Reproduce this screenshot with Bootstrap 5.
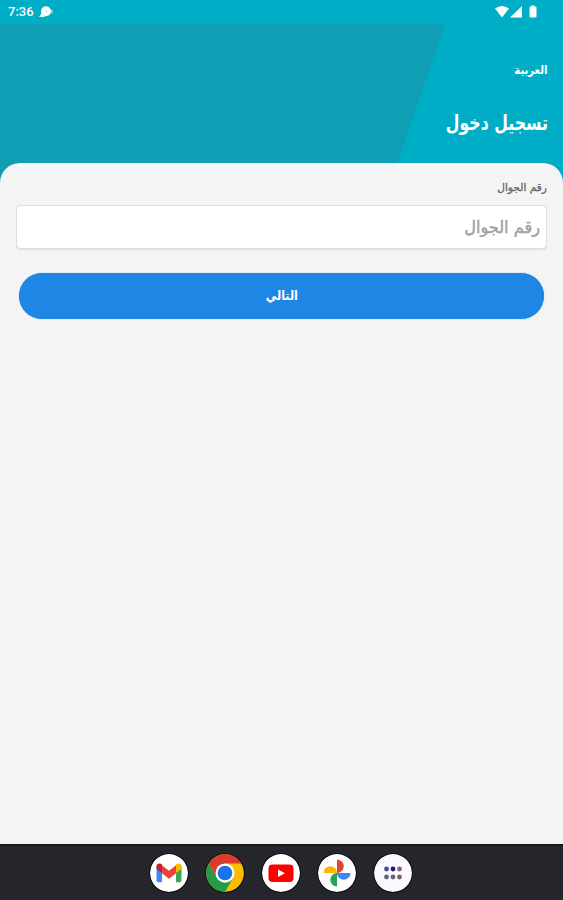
<!DOCTYPE html>
<html lang="ar" dir="rtl">
<head>
<meta charset="utf-8">
<meta name="viewport" content="width=device-width, initial-scale=1">
<title>تسجيل دخول</title>
<link href="https://cdn.jsdelivr.net/npm/bootstrap@5.3.0/dist/css/bootstrap.min.css" rel="stylesheet">
<style>
  body { font-family: "DejaVu Sans", sans-serif; background: #f4f4f4; overflow: hidden; }
  .hero { height: 184px; background: #00adc6; }
  .hero-band { height: 184px; background: #0f9fb4; clip-path: polygon(0 24px, 445px 24px, 390px 184px, 0 184px); }
  .status { height: 24px; padding: 0 26px 0 8px; color: #fff; font: 500 13px/24px Roboto, sans-serif; }
  .topbar { height: 92px; padding: 0 15px; }
  .hero-layout { display: grid; }
  .hero-layout > * { grid-area: 1 / 1; min-width: 0; }
  .lang { font-size: 12px; line-height: 16px; margin-top: 38px; transform: scaleX(.84); transform-origin: right; }
  .back { margin-top: 35px; }
  .title { font-size: 21px; line-height: 28px; padding: 0; margin: -7px 15px 0; transform: scaleX(.75); transform-origin: right; }
  .sheet { background: #f4f4f4; border-radius: 20px 20px 0 0; margin-top: -21px; padding: 16px 16px 0; }
  .phone-label { font-size: 11px; line-height: 18px; color: #666; -webkit-text-stroke: .3px #666; transform: scaleX(.965); transform-origin: right; }
  .phone.form-control { height: 44px; margin-top: 8px; border: 1px solid #dedede; border-radius: 4px; padding: 0 6px; font-size: 17px; box-shadow: 0 1px 1px #e3e3e3; }
  .phone::placeholder { color: #a2a2a2; -webkit-text-stroke: .5px #a2a2a2; transform: scaleX(.95); transform-origin: right; opacity: 1; }
  .next.btn { height: 46px; margin: 24px 3px 0; background: #1e87e5; color: #fff; font-size: 13px; padding: 0; box-shadow: 0 0 1px #1e87e5; }
  .next span { display: inline-block; transform: scaleX(.86); }
  .dock { height: 56px; background: #25262b; border-top: 2px solid #17181b; gap: 18px; padding-right: 1px; }
  .app-icon { width: 38px; height: 38px; border-radius: 50%; box-shadow: 0 0 0 1px #111216; }
</style>
<script src="https://cdn.jsdelivr.net/npm/bootstrap@5.3.0/dist/js/bootstrap.bundle.min.js"></script>
</head>
<body class="vh-100 d-flex flex-column">
<header class="hero hero-layout flex-shrink-0">
  <div class="hero-band"></div>
  <div>
    <div class="status d-flex align-items-center justify-content-between" dir="ltr">
      <div class="d-flex align-items-center gap-1"><span>7:36</span>
        <svg width="16" height="12" viewBox="0 0 16 12"><circle cx="8" cy="5.300" r="5" fill="#fff"/><path d="M4 7 1 11h6z" fill="#fff"/><path d="M8 3v3h2" fill="none" stroke="#b5e2e9"/><path d="M14 3.500v4" stroke="#8fd8e3" stroke-width="1.500"/></svg>
      </div>
      <svg width="42" height="14" viewBox="0 0 42 14" fill="#fff"><path d="M0 3.600Q7 -1.800 14 3.600L7 12.500z"/><path d="M27 1v11.500H15z"/><path d="M35.500 1.500h1V.5h3v1h1q1 0 1 1v9q0 1-1 1h-5q-1 0-1-1v-9q0-1 1-1z"/></svg>
    </div>
    <div class="topbar d-flex justify-content-between align-items-start">
      <a class="lang text-white fw-bold text-decoration-none" href="#">العربية</a>
      <a class="back d-flex" href="#" aria-label="رجوع"><svg width="14" height="14" viewBox="0 0 14 14" fill="none" stroke="#fff" stroke-width="1.900"><path d="M14 7H1.800M7 1.500 1.500 7 7 12.500"/></svg></a>
    </div>
    <h1 class="title text-white fw-bold">تسجيل دخول</h1>
  </div>
</header>
<main class="sheet position-relative flex-grow-1">
  <form class="d-flex flex-column">
    <label class="phone-label" for="phone">رقم الجوال</label>
    <input id="phone" class="phone form-control" type="text" placeholder="رقم الجوال">
    <button class="next btn rounded-pill fw-bold" type="button"><span>التالي</span></button>
  </form>
</main>
<footer class="dock d-flex justify-content-center align-items-center flex-shrink-0" dir="ltr">
  <svg class="app-icon" viewBox="0 0 38 38"><circle cx="19" cy="19" r="19" fill="#fff"/><path d="M6.500 12v14.500q0 1.800 1.800 1.800H12V16z" fill="#4285f4"/><path d="M31.500 12v14.500q0 1.800-1.800 1.800H26V16z" fill="#34a853"/><path d="M11 10.500 19 16.700l8-6.200V18.500l-8 6.200L11 18.500z" fill="#ea4335"/><path d="M6.500 12.500c0-3 3-3.800 5.500-2V19l-5.500-4.300z" fill="#c5221f"/><path d="M31.500 12.500c0-3-3-3.800-5.500-2V19l5.500-4.300z" fill="#fbbc04"/></svg>
  <svg class="app-icon" viewBox="0 0 38 38"><circle cx="19" cy="19" r="19" fill="#fbbc05"/><path d="M2.500 9.500A19 19 0 0 1 35.500 9.500H19L11 24z" fill="#dc3a2c"/><path d="M2.500 9.500 10.800 23.700A9.500 9.500 0 0 0 27.200 23.700L19 38A19 19 0 0 1 2.500 9.500" fill="#249b47"/><circle cx="19" cy="19" r="9.500" fill="#fff"/><circle cx="19" cy="19" r="7.300" fill="#1a73e8"/></svg>
  <svg class="app-icon" viewBox="0 0 38 38"><circle cx="19" cy="19" r="19" fill="#fff"/><rect x="6.500" y="10.500" width="25" height="17.500" rx="4" fill="#f00"/><path d="m16 15.500 7 3.700-7 3.700z" fill="#fff"/></svg>
  <svg class="app-icon" viewBox="0 0 38 38"><circle cx="19" cy="19" r="19" fill="#fff"/><path d="M19 19V5.500a6.750 6.750 0 0 1 0 13.500" fill="#e54335"/><path d="M19 19H32.500a6.750 6.750 0 0 1-13.500 0" fill="#4285f4"/><path d="M19 19V32.500a6.750 6.750 0 0 1 0-13.500" fill="#27a550"/><path d="M19 19H5.500a6.750 6.750 0 0 1 13.500 0" fill="#f9b60a"/></svg>
  <svg class="app-icon" viewBox="0 0 38 38"><circle cx="19" cy="19" r="19" fill="#fbf9ff"/><g fill="#66637c"><circle cx="12.500" cy="15" r="2.400" fill="#3f4e91"/><circle cx="19" cy="15" r="2.400" fill="#201b80"/><circle cx="25.500" cy="15" r="2.400" fill="#965f76"/><circle cx="12.500" cy="23" r="2.400"/><circle cx="19" cy="23" r="2.400"/><circle cx="25.500" cy="23" r="2.400"/></g></svg>
</footer>
</body>
</html>
